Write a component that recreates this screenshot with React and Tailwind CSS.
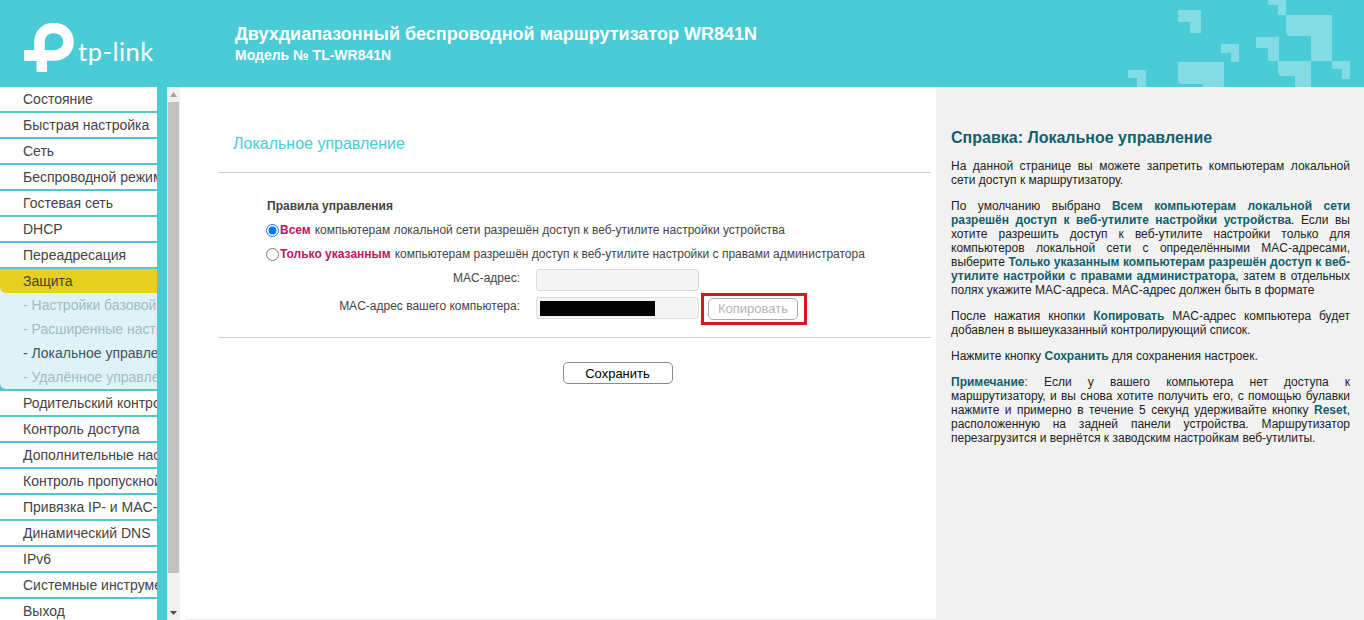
import React from "react";

const menuTop = ["Состояние", "Быстрая настройка", "Сеть", "Беспроводной режим", "Гостевая сеть", "DHCP", "Переадресация"];
const menuSub = [
  { label: "- Настройки базовой защиты", active: false },
  { label: "- Расширенные настройки защиты", active: false },
  { label: "- Локальное управление", active: true },
  { label: "- Удалённое управление", active: false },
];
const menuBottom = [
  "Родительский контроль",
  "Контроль доступа",
  "Дополнительные настройки",
  "Контроль пропускной способности",
  "Привязка IP- и MAC-адресов",
  "Динамический DNS",
  "IPv6",
  "Системные инструменты",
  "Выход",
];

function Tiles() {
  return (
    <svg width="254" height="87" viewBox="0 0 254 87" fill="#82dce3" className="shrink-0">
      <path d="M68 10H91V33H80V22H68Z" />
      <path d="M158 0H176V15H168V5H158Z" />
      <path d="M176 15H222V61H201V36H180Q176 36 176 32Z" />
      <path d="M111 44H129V62H121V53H111Z" />
      <path d="M146 37H169V61H158V48H146Z" />
      <path d="M168 61H201V87H185V76H172Q168 76 168 72Z" />
      <path d="M222 61H240V79H232V69H222Z" />
      <path d="M68 62H114V87H93V84H72Q68 84 68 80Z" />
      <path d="M18 70H36V87H27V78H18Z" />
    </svg>
  );
}

function Logo() {
  return (
    <div className="flex w-[235px] pl-6 pt-[23px] shrink-0">
      <svg width="50" height="50" viewBox="0 0 50 50" fill="none" className="shrink-0">
        <path d="M15.500 28V19C15.500 10 22 5 30 5C38.500 5 44.500 11 44.500 19C44.500 27 38 32.500 30 32.500H22" stroke="#fff" strokeWidth="10.500" />
        <path d="M0 27H23V49H12.500V38H1.500Q0 38 0 36.500Z" fill="#fff" />
      </svg>
      <span className="text-white text-[25.5px] leading-[26px] font-['Lato',sans-serif] ml-[4px] mt-[15px] tracking-[0.5px]">tp-link</span>
    </div>
  );
}

function Row({ children }) {
  return (
    <div className="h-[26px] bg-white border-b-2 border-[#55c6cd] pl-[23px] leading-[24px] whitespace-nowrap overflow-hidden text-[#444]">
      {children}
    </div>
  );
}

function Sidebar() {
  return (
    <div className="w-[157px] shrink-0 h-[533px] overflow-hidden text-[14px]">
      {menuTop.map((m) => (
        <Row key={m}>{m}</Row>
      ))}
      <div className="bg-[#dff3f7]">
        <div className="h-[24px] bg-[#e5cf1f] rounded-bl-[6px] pl-[23px] leading-[24px] text-[#444]">Защита</div>
      </div>
      <div className="bg-[#55c6cd] pb-[2px]">
        <div className="bg-[#dff3f7] rounded-bl-[6px]">
          {menuSub.map((s) => (
            <div key={s.label} className={`h-[24px] pl-[23px] leading-[24px] whitespace-nowrap overflow-hidden ${s.active ? "text-[#3d5560]" : "text-[#9fbcc4]"}`}>
              {s.label}
            </div>
          ))}
        </div>
      </div>
      {menuBottom.map((m) => (
        <Row key={m}>{m}</Row>
      ))}
    </div>
  );
}

function Scrollbar() {
  return (
    <div className="w-[13px] shrink-0 bg-[#f1f1f1] flex flex-col items-center">
      <svg width="13" height="15" viewBox="0 0 13 15" className="shrink-0">
        <path d="M3 10L6.500 5L10 10Z" fill="#a3a3a3" />
      </svg>
      <div className="w-[11px] h-[471px] bg-[#c1c1c1]" />
      <div className="flex-1" />
      <svg width="13" height="15" viewBox="0 0 13 15" className="shrink-0">
        <path d="M3 6H10L6.500 10Z" fill="#505050" />
      </svg>
    </div>
  );
}

function MainForm() {
  return (
    <div className="w-[756px] shrink-0 bg-white pl-[38px] pr-[5px] text-[12px] text-[#444] flex flex-col">
      <div className="pt-[47px] pl-[15px] h-[86px] border-b border-[#cfcfcf] text-[16px] text-[#4acbd6] leading-[20px]">Локальное управление</div>
      <div className="h-[165px] border-b border-[#cfcfcf]">
        <div className="pl-[49px] pt-[25px] font-bold leading-[16px]">Правила управления</div>
        <label className="flex items-center h-[16px] mt-[8px] pl-[48px]">
          <input type="radio" name="rule" defaultChecked className="w-[13px] h-[13px] m-0 accent-[#0075ff]" />
          <b className="text-[#b5185f] ml-[1px] mr-[4px]">Всем</b>
          компьютерам локальной сети разрешён доступ к веб-утилите настройки устройства
        </label>
        <label className="flex items-center h-[16px] mt-[8px] pl-[48px]">
          <input type="radio" name="rule" className="w-[13px] h-[13px] m-0" />
          <b className="text-[#b5185f] ml-[1px] mr-[4px]">Только указанным</b>
          компьютерам разрешён доступ к веб-утилите настройки с правами администратора
        </label>
        <div className="flex items-start h-[22px] mt-[7px]">
          <div className="w-[302px] text-right leading-[18px]">MAC-адрес:</div>
          <div className="w-[163px] h-[22px] ml-[16px] bg-[#f5f5f5] border border-[#ddd] rounded-[3px]" />
        </div>
        <div className="flex items-start h-[22px] mt-[6px]">
          <div className="w-[302px] text-right leading-[18px]">MAC-адрес вашего компьютера:</div>
          <div className="w-[163px] h-[22px] ml-[16px] bg-[#f5f5f5] border border-[#ddd] rounded-[3px] pl-[3px] pt-[3px]">
            <div className="w-[115px] h-[15px] bg-black" />
          </div>
          <div className="ml-[2px] -mt-[4px] w-[106px] h-[32px] shrink-0 border-[3px] border-[#e0141c] flex items-center justify-center">
            <button className="w-[90px] h-[22px] mr-[2px] border border-[#aaa] rounded-[5px] bg-white text-[13px] text-[#b5b5b5] font-['Liberation_Sans',sans-serif]">Копировать</button>
          </div>
        </div>
      </div>
      <div className="flex justify-center pt-[24px] pl-[86px]">
        <button className="w-[110px] h-[22px] pt-px border border-[#8a8a8a] rounded-[5px] bg-white text-[13px] text-black">Сохранить</button>
      </div>
      <div className="mt-auto -ml-[32px] -mr-[5px] h-px bg-[#eeeeee]" />
    </div>
  );
}

function Help() {
  const b = "font-bold text-[#10606c]";
  return (
    <div className="flex-1 bg-[#f2f2f2] pl-[15px] pr-[14px] pt-[41px] text-[12px] leading-[14px] text-[#222] text-justify">
      <h2 className="text-[16px] leading-[20px] font-bold text-[#10606c] mb-[11px]">Справка: Локальное управление</h2>
      <p className="mb-[12px]">На данной странице вы можете запретить компьютерам локальной сети доступ к маршрутизатору.</p>
      <p className="mb-[12px]">
        По умолчанию выбрано <span className={b}>Всем компьютерам локальной сети разрешён доступ к веб-утилите настройки устройства</span>. Если вы хотите разрешить доступ к веб-утилите настройки только для компьютеров локальной сети с определёнными MAC-адресами, выберите <span className={b}>Только указанным компьютерам разрешён доступ к веб-утилите настройки с правами администратора</span>, затем в отдельных полях укажите MAC-адреса. MAC-адрес должен быть в формате
      </p>
      <p className="mb-[12px]">
        После нажатия кнопки <span className={b}>Копировать</span> MAC-адрес компьютера будет добавлен в вышеуказанный контролирующий список.
      </p>
      <p className="mb-[12px]">
        Нажмите кнопку <span className={b}>Сохранить</span> для сохранения настроек.
      </p>
      <p>
        <span className={b}>Примечание</span>: Если у вашего компьютера нет доступа к маршрутизатору, и вы снова хотите получить его, с помощью булавки нажмите и примерно в течение 5 секунд удерживайте кнопку <span className={b}>Reset</span>, расположенную на задней панели устройства. Маршрутизатор перезагрузится и вернётся к заводским настройкам веб-утилиты.
      </p>
    </div>
  );
}

export default function App() {
  return (
    <div className="w-[1364px] h-[620px] overflow-hidden flex flex-col font-['Liberation_Sans',sans-serif]">
      <header className="h-[87px] shrink-0 bg-[#4acbd6] flex items-stretch overflow-hidden">
        <Logo />
        <div className="flex-1 pt-[23px] text-white font-bold">
          <div className="text-[18px] leading-[22px]">Двухдиапазонный беспроводной маршрутизатор WR841N</div>
          <div className="text-[14px] leading-[18px] mt-[1px]">Модель № TL-WR841N</div>
        </div>
        <Tiles />
      </header>
      <div className="flex flex-1 min-h-0">
        <Sidebar />
        <div className="w-[10px] shrink-0 bg-[#4acbd6]" />
        <Scrollbar />
        <MainForm />
        <Help />
      </div>
    </div>
  );
}
